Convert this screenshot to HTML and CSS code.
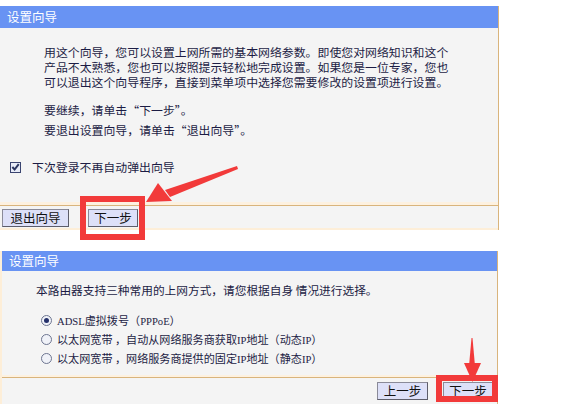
FILE: index.html
```html
<!DOCTYPE html>
<html lang="zh-CN">
<head>
<meta charset="utf-8">
<title>设置向导</title>
<link rel="stylesheet" href="styles.css">
</head>
<body>
<div class="page">
  <section class="panel panel-one">
    <div class="title">设置向导</div>
    <div class="intro">
      <div class="para">
        <span class="line">用这个向导，您可以设置上网所需的基本网络参数。即使您对网络知识和这个</span>
        <span class="line">产品不太熟悉，您也可以按照提示轻松地完成设置。如果您是一位专家，您也</span>
        <span class="line">可以退出这个向导程序，直接到菜单项中选择您需要修改的设置项进行设置。</span>
      </div>
      <p class="hint">要继续，请单击“下一步”。</p>
      <p class="hint">要退出设置向导，请单击“退出向导”。</p>
    </div>
    <div class="check-row">
      <span class="checkbox"><svg width="10" height="10" viewBox="0 0 10 10"><path d="M1.5 5 L4 7.8 L8.6 1.8" fill="none" stroke="#2a3560" stroke-width="2.2"/></svg></span>
      <span class="check-label">下次登录不再自动弹出向导</span>
    </div>
    <div class="btn-row btn-row-one">
      <button class="btn btn-exit">退出向导</button>
      <button class="btn btn-next1">下一步</button>
    </div>
  </section>

  <section class="panel panel-two">
    <div class="title title-two">设置向导</div>
    <p class="lead">本路由器支持三种常用的上网方式，请您根据自身 情况进行选择。</p>
    <ul class="options">
      <li class="opt"><span class="radio on"></span><span class="opt-text"><span class="latin">ADSL</span>虚拟拨号（<span class="latin">PPPoE</span>）</span></li>
      <li class="opt"><span class="radio"></span><span class="opt-text">以太网宽带 ，自动从网络服务商获取<span class="latin">IP</span>地址（动态<span class="latin">IP</span>）</span></li>
      <li class="opt"><span class="radio"></span><span class="opt-text">以太网宽带 ，网络服务商提供的固定<span class="latin">IP</span>地址（静态<span class="latin">IP</span>）</span></li>
    </ul>
    <div class="btn-row btn-row-two">
      <button class="btn btn-prev">上一步</button>
      <button class="btn btn-next2">下一步</button>
    </div>
  </section>

  <div class="mark mark-one"></div>
  <div class="mark mark-two"></div>
  <svg class="arrows" width="575" height="404" viewBox="0 0 575 404">
    <polygon points="237,166 238,169 170,197 165,190" fill="#f23a3a"/>
    <polygon points="146,202 158,183 172,201" fill="#f23a3a"/>
    <polygon points="471.5,338 472.5,338 475,366 469,366" fill="#f23a3a"/>
    <polygon points="464,363 481,363 472.5,382" fill="#f23a3a"/>
  </svg>
</div>
</body>
</html>
```

FILE: styles.css
```css
html, body {
  margin: 0;
  padding: 0;
  background: #ffffff;
}

body {
  font-family: "Noto Sans CJK SC", "Noto Sans", sans-serif;
  color: #1c1c44;
}

.page {
  position: relative;
  width: 575px;
  height: 404px;
  overflow: hidden;
}

.panel {
  background: #f4f4f4;
  border-right: 1px solid #d9b47c;
  box-sizing: border-box;
}

.panel-one {
  margin-top: 6px;
  width: 499px;
}

.title {
  height: 22px;
  line-height: 21px;
  background: #6893f3;
  color: #ffffff;
  font-size: 12.5px;
  padding-left: 7px;
}

.title-two {
  height: 20px;
  line-height: 20px;
}

.intro {
  padding: 16px 0 0 44px;
}

.para {
  display: flex;
  flex-direction: column;
}

.line {
  display: block;
  height: 15px;
  font-size: 11.9px;
  line-height: 15px;
  white-space: nowrap;
}

.hint {
  margin: 0;
  font-size: 11.9px;
  line-height: 20px;
}

.para + .hint {
  margin-top: 11px;
}

.check-row {
  display: flex;
  align-items: center;
  gap: 11px;
  padding: 20px 0 0 10px;
  height: 14px;
}

.checkbox {
  display: flex;
  align-items: center;
  justify-content: center;
  width: 9px;
  height: 9px;
  border: 1px solid #3a4470;
  background: #e8ecf8;
}

.check-label {
  font-size: 11.9px;
  line-height: 14px;
}

.btn-row {
  display: flex;
  align-items: center;
  box-sizing: border-box;
}

.btn-row-one {
  margin-top: 28px;
  height: 28px;
  border-top: 3px solid #fdf1e0;
  border-bottom: 2px solid #fdeed8;
  box-shadow: inset 0 1px 0 #d9b47c;
  padding: 3px 0 0 2px;
  gap: 19px;
}

.btn {
  font-family: "Noto Sans CJK SC", "Noto Sans", sans-serif;
  font-size: 12.5px;
  line-height: 16px;
  color: #111;
  background: #dde0f8;
  border: 1px solid #5d5d6a;
  border-top-color: #8a8a98;
  border-left-color: #8a8a98;
  padding: 0;
  height: 18px;
  margin: 0;
}

.btn-exit {
  width: 67px;
}

.btn-next1 {
  width: 50px;
}

.panel-two {
  margin-top: 21px;
  width: 498px;
  border-left: 2px solid #fdeed8;
  height: 160px;
}

.lead {
  margin: 0;
  padding: 11px 0 0 34px;
  font-size: 11.7px;
  line-height: 16px;
  white-space: pre;
}

.options {
  list-style: none;
  margin: 13px 0 0 0;
  padding: 0 0 0 39px;
}

.opt {
  display: flex;
  align-items: center;
  height: 19px;
  gap: 5px;
}

.radio {
  width: 9px;
  height: 9px;
  border-radius: 50%;
  border: 1px solid #6d7590;
  background: #f0f2f8;
  position: relative;
}

.radio.on::after {
  content: "";
  position: absolute;
  left: 2px;
  top: 2px;
  width: 5px;
  height: 5px;
  border-radius: 50%;
  background: #24306a;
}

.opt-text {
  font-size: 11.1px;
  line-height: 16px;
  white-space: pre;
}

.latin {
  font-family: "Liberation Serif", "DejaVu Serif", serif;
  font-size: 10.6px;
}

.btn-row-two {
  margin-top: 9px;
  height: 26px;
  border-top: 1px solid #d9b47c;
  box-shadow: 0 -2px 0 #fdf1e0;
  justify-content: flex-end;
  padding: 4px 4px 0 0;
  align-items: flex-start;
  gap: 15px;
}

.btn-prev {
  width: 51px;
}

.btn-next2 {
  width: 50px;
}

.mark {
  position: absolute;
  box-sizing: border-box;
  border: 6px solid #f23a3a;
}

.mark-one {
  left: 80px;
  top: 196px;
  width: 65px;
  height: 44px;
}

.mark-two {
  left: 436px;
  top: 375px;
  width: 62px;
  height: 27px;
}

.arrows {
  position: absolute;
  left: 0;
  top: 0;
  pointer-events: none;
}
```
